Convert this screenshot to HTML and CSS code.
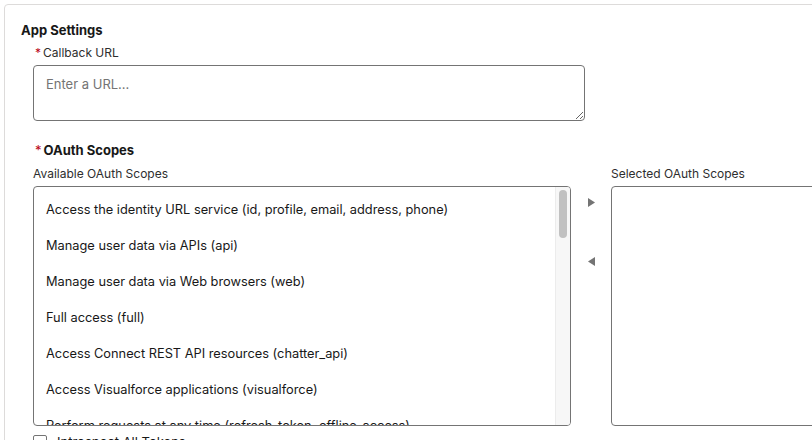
FILE: index.html
```html
<!DOCTYPE html>
<html lang="en">
<head>
<meta charset="UTF-8">
<meta name="viewport" content="width=device-width, initial-scale=1.0">
<title>App Settings</title>
<link rel="stylesheet" href="styles.css">
</head>
<body>
<div class="card">
    <h2 class="section-title">App Settings</h2>
    <div class="fields">
        <div class="field">
            <label class="field-label" for="callback"><abbr class="required">*</abbr>Callback URL</label>
            <textarea id="callback" class="url-input" placeholder="Enter a URL..."></textarea>
        </div>

        <div class="field scopes">
            <div class="field-label strong"><abbr class="required">*</abbr>OAuth Scopes</div>
            <div class="dueling">
                <div class="pick-col">
                    <div class="pick-label">Available OAuth Scopes</div>
                    <div class="listbox">
                        <ul class="options">
                            <li>Access the identity URL service (id, profile, email, address, phone)</li>
                            <li>Manage user data via APIs (api)</li>
                            <li>Manage user data via Web browsers (web)</li>
                            <li>Full access (full)</li>
                            <li>Access Connect REST API resources (chatter_api)</li>
                            <li>Access Visualforce applications (visualforce)</li>
                            <li>Perform requests at any time (refresh_token, offline_access)</li>
                            <li>Access custom permissions (custom_permissions)</li>
                        </ul>
                        <div class="scrollbar"><div class="thumb"></div></div>
                    </div>
                </div>
                <div class="move-buttons">
                    <button class="move" title="Move to Selected">
                        <svg width="7" height="9" viewBox="0 0 7 9"><path d="M0 0 L7 4.5 L0 9 Z" fill="#747474"/></svg>
                    </button>
                    <button class="move" title="Move to Available">
                        <svg width="7" height="9" viewBox="0 0 7 9"><path d="M7 0 L0 4.5 L7 9 Z" fill="#747474"/></svg>
                    </button>
                </div>
                <div class="pick-col selected-col">
                    <div class="pick-label">Selected OAuth Scopes</div>
                    <div class="listbox empty"></div>
                </div>
            </div>
        </div>

        <label class="check-row">
            <input type="checkbox" class="check">
            <span>Introspect All Tokens</span>
        </label>
    </div>
</div>
</body>
</html>
```

FILE: styles.css
```css
body {
    margin: 0;
    padding: 0;
    font-family: Inter, "Liberation Sans", Arial, sans-serif;
    color: #181818;
    background: #fff;
    overflow: hidden;
}

.card {
    margin: 4px 0 0 4px;
    width: 1000px;
    height: 600px;
    border: 1px solid #dddbda;
    border-radius: 4px;
    padding: 16px 16px;
    box-sizing: border-box;
}

.section-title {
    margin: 0;
    font-size: 13px;
    line-height: 18px;
    font-weight: bold;
}

.fields {
    padding-left: 12px;
    margin-top: 5px;
}

.field-label {
    display: block;
    font-size: 12px;
    line-height: 18px;
    color: #2e2e2e;
    margin-bottom: 3px;
}

.field-label.strong {
    font-size: 13px;
    font-weight: 650;
    color: #181818;
    margin-bottom: 6px;
}

.required {
    color: #ba0517;
    text-decoration: none;
    border: none;
    margin: 0 2px 0 2px;
    font-weight: normal;
}

.url-input {
    display: block;
    width: 552px;
    height: 56px;
    box-sizing: border-box;
    border: 1px solid #747474;
    border-radius: 4px;
    padding: 9px 12px;
    font-family: inherit;
    font-size: 13px;
    line-height: 18px;
    resize: vertical;
    outline: none;
}

.url-input::placeholder {
    color: #747474;
}

.scopes {
    margin-top: 20px;
}

.dueling {
    display: flex;
}

.pick-col {
    flex-shrink: 0;
}

.pick-label {
    font-size: 12px;
    line-height: 18px;
    color: #2e2e2e;
    margin-bottom: 3px;
}

.listbox {
    display: flex;
    width: 538px;
    height: 240px;
    box-sizing: border-box;
    border: 1px solid #747474;
    border-radius: 4px;
    overflow: hidden;
}

.options {
    flex: 1;
    margin: 0;
    padding: 5px 0 0 0;
    list-style: none;
    overflow: hidden;
}

.options li {
    font-size: 12.8px;
    line-height: 20px;
    padding: 8px 12px;
    white-space: nowrap;
}

.scrollbar {
    width: 14px;
    background: #f7f7f7;
    border-left: 1px solid #ececec;
}

.thumb {
    width: 8px;
    height: 48px;
    margin: 3px auto 0;
    border-radius: 4px;
    background: #c1c1c1;
}

.move-buttons {
    width: 40px;
    flex-shrink: 0;
    display: flex;
    flex-direction: column;
    align-items: center;
    padding-top: 25px;
    gap: 35px;
}

.move {
    width: 24px;
    height: 24px;
    padding: 0;
    border: none;
    background: none;
    display: flex;
    align-items: center;
    justify-content: center;
    cursor: pointer;
}

.selected-col .listbox {
    width: 400px;
}

.check-row {
    display: flex;
    align-items: center;
    gap: 10px;
    margin-top: 7px;
    font-size: 13px;
    line-height: 18px;
}

.check {
    appearance: none;
    margin: 0;
    width: 14px;
    height: 14px;
    border: 1px solid #747474;
    border-radius: 2px;
    background: #fff;
}
```
